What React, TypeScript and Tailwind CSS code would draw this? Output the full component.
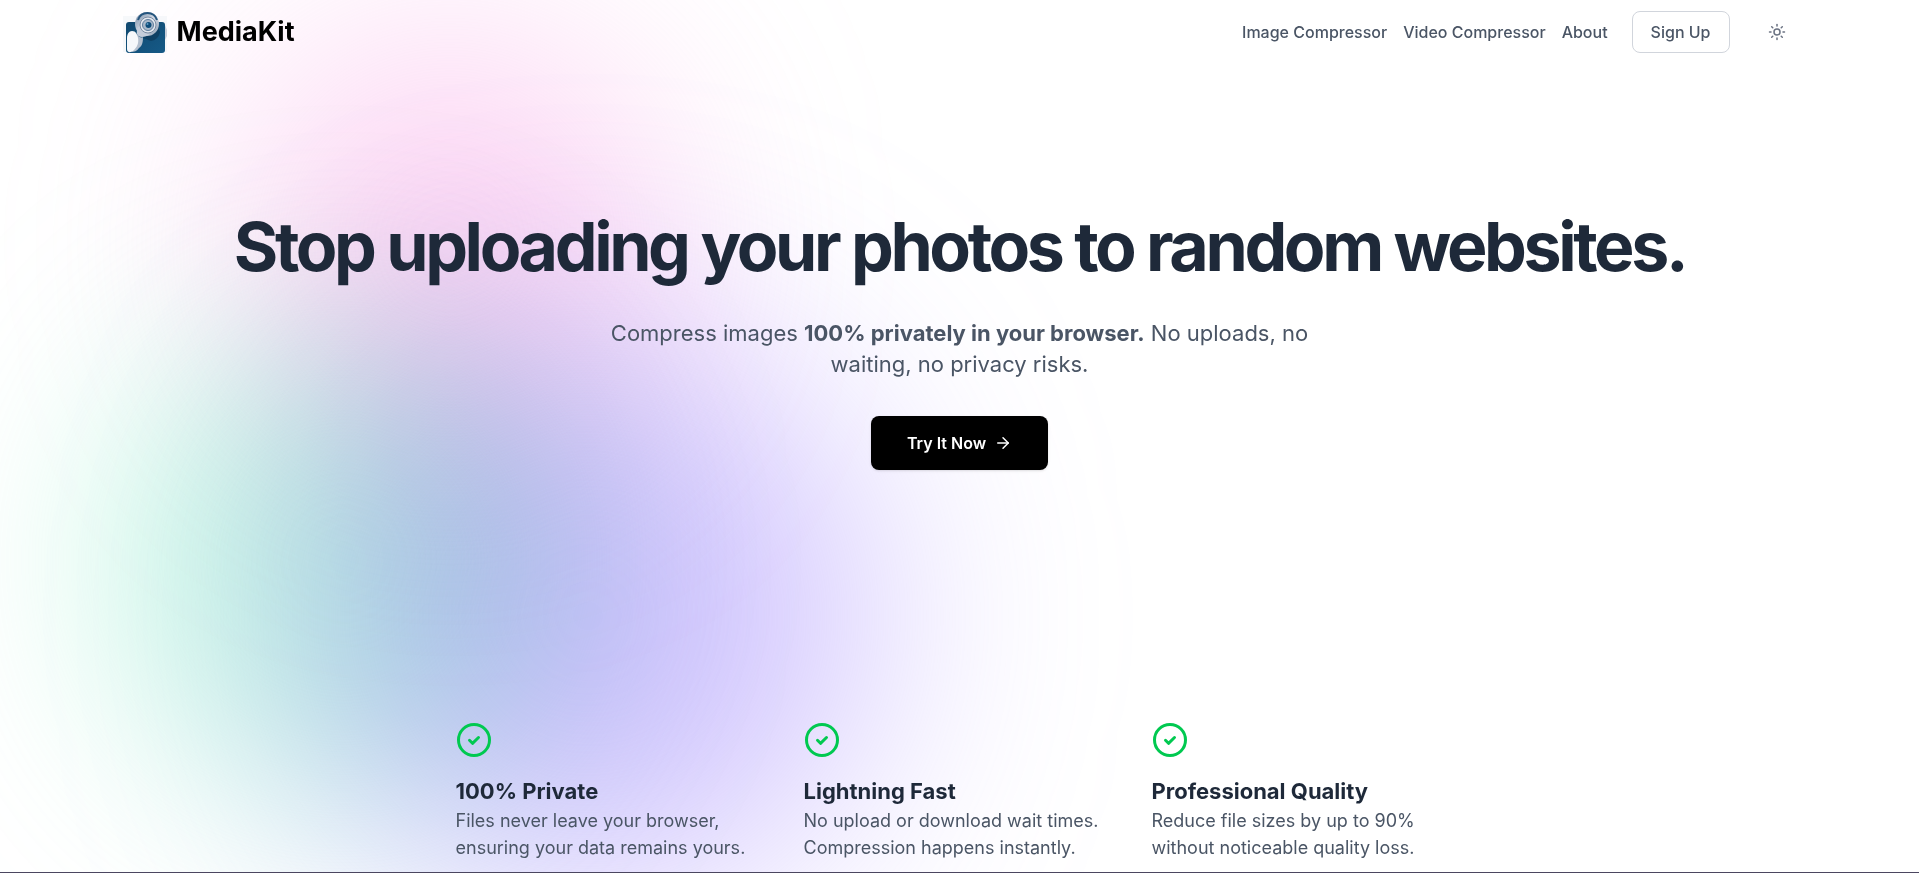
import React from 'react';
import { ArrowRight, Sun } from 'lucide-react';

const navLinks = ['Image Compressor', 'Video Compressor', 'About'];

const features = [
  {
    title: '100% Private',
    text: 'Files never leave your browser, ensuring your data remains yours.',
  },
  {
    title: 'Lightning Fast',
    text: 'No upload or download wait times. Compression happens instantly.',
  },
  {
    title: 'Professional Quality',
    text: 'Reduce file sizes by up to 90% without noticeable quality loss.',
  },
];

const Logo: React.FC = () => (
  <svg className="h-11 w-11" viewBox="0 0 44 44" aria-hidden="true">
    <defs>
      <linearGradient id="bag" x1="0" y1="0" x2="1" y2="1">
        <stop offset="0" stopColor="#10486f" />
        <stop offset="1" stopColor="#165a87" />
      </linearGradient>
      <linearGradient id="ring" x1="0" y1="0" x2="1" y2="1">
        <stop offset="0" stopColor="#6f88a3" />
        <stop offset="0.5" stopColor="#d3d9e4" />
        <stop offset="1" stopColor="#8d9db2" />
      </linearGradient>
    </defs>
    <rect x="0" y="6" width="44" height="36" fill="#eef1f6" opacity="0.5" />
    <path d="M42 15l2 5v6l-2 4z" fill="#c9cfda" />
    <rect x="3" y="12" width="39" height="31" rx="3" fill="url(#bag)" />
    <path d="M20 28l8 3c5-1 8-4 9-9l-3-8z" fill="#0b3453" opacity="0.6" />
    <path d="M14 24c2 4 5 4 6 3 0 6-1 9-4 11-2 3-5 4-8 4 4-5 5-11 6-18z" fill="#b4bfce" />
    <path d="M4 28c0-4 2-7 5-7 4 0 5 3 6 7 1 5-1 9-4 12-3 3-7 3-7-1z" fill="#f6f8fb" />
    <circle cx="24" cy="14" r="12" fill="url(#ring)" />
    <path d="M14 24c-1-5 2-8 4-9 1 5 4 8 9 9-2 2-6 3-8 3-3 0-4-1-5-3z" fill="#c5cddb" />
    <path d="M15 10a10 10 0 0 1 19 0" fill="none" stroke="#25557d" strokeWidth="2" />
    <circle cx="25" cy="15" r="8" fill="#e3e7ee" stroke="#7a8ca3" />
    <circle cx="25" cy="15" r="5.5" fill="#a9b8ca" stroke="#5f7e9d" />
    <circle cx="25.5" cy="15" r="3" fill="#0d4c7a" />
    <circle cx="24.5" cy="14" r="1" fill="#5d9ac4" />
  </svg>
);

const CheckIcon: React.FC = () => (
  <svg
    className="h-9 w-9 text-[#00c950]"
    viewBox="0 0 36 36"
    fill="none"
    stroke="currentColor"
    strokeWidth="3"
    strokeLinecap="round"
    strokeLinejoin="round"
    aria-hidden="true"
  >
    <circle cx="18" cy="18" r="15.5" />
    <path d="M13.5 18.3l3 3 6-5.8" />
  </svg>
);

const App: React.FC = () => {
  return (
    <div
      className="relative flex min-h-screen flex-col overflow-hidden border-b border-[#4b4660] bg-white"
      style={{ fontFamily: 'Inter, sans-serif' }}
    >
      {/* Colour blobs behind the hero */}
      <div className="pointer-events-none absolute inset-0" aria-hidden="true">
        <div className="absolute top-8 left-60 h-105 w-105 rounded-full bg-[#f9a0e4]/45 mix-blend-multiply blur-[110px]" />
        <div className="absolute top-80 left-26 h-120 w-120 rounded-full bg-[#86f0c6]/45 mix-blend-multiply blur-[100px]" />
        <div className="absolute top-84 left-77 h-140 w-140 rounded-full bg-[#a890fd]/55 mix-blend-multiply blur-[120px]" />
      </div>

      <header className="relative mx-auto flex h-16 w-full max-w-[1674px] items-center justify-between">
        <a href="#" className="flex items-center gap-2.5">
          <Logo />
          <span className="text-[27px] font-bold text-black">MediaKit</span>
        </a>

        <nav className="flex items-center text-base font-medium text-gray-600">
          <div className="flex items-center gap-4">
            {navLinks.map(link => (
              <a key={link} href="#" className="hover:text-gray-900">{link}</a>
            ))}
          </div>
          <button
            type="button"
            className="ml-6 h-[42px] rounded-lg border border-gray-300 bg-white px-[18px]"
          >
            Sign Up
          </button>
          <button
            type="button"
            aria-label="Toggle theme"
            className="ml-[27px] flex h-10 w-10 items-center justify-center text-gray-500"
          >
            <Sun className="h-[18px] w-[18px]" />
          </button>
        </nav>
      </header>

      <main className="relative flex flex-col items-center">
        <h1 className="mt-[142px] text-center text-[68px] leading-20 font-bold tracking-tighter text-gray-800">
          Stop uploading your photos to random websites.
        </h1>
        <p className="mt-8 max-w-[760px] text-center text-[22px] leading-[31px] text-gray-600">
          Compress images <strong className="font-bold">100% privately in your browser.</strong> No uploads, no
          <br />
          waiting, no privacy risks.
        </p>
        <button
          type="button"
          className="mt-9 flex h-[54px] items-center gap-2 rounded-lg bg-black px-9 text-base font-semibold text-white shadow-sm"
        >
          Try It Now
          <ArrowRight className="h-[18px] w-[18px]" />
        </button>

        <section className="mt-[252px] grid w-full max-w-[1008px] grid-cols-3 gap-9">
          {features.map(feature => (
            <div key={feature.title}>
              <CheckIcon />
              <h3 className="mt-[18px] text-[22px] leading-[31px] font-bold text-gray-800">{feature.title}</h3>
              <p className="text-lg leading-[27px] text-gray-600">{feature.text}</p>
            </div>
          ))}
        </section>
      </main>
    </div>
  );
};

export default App;
